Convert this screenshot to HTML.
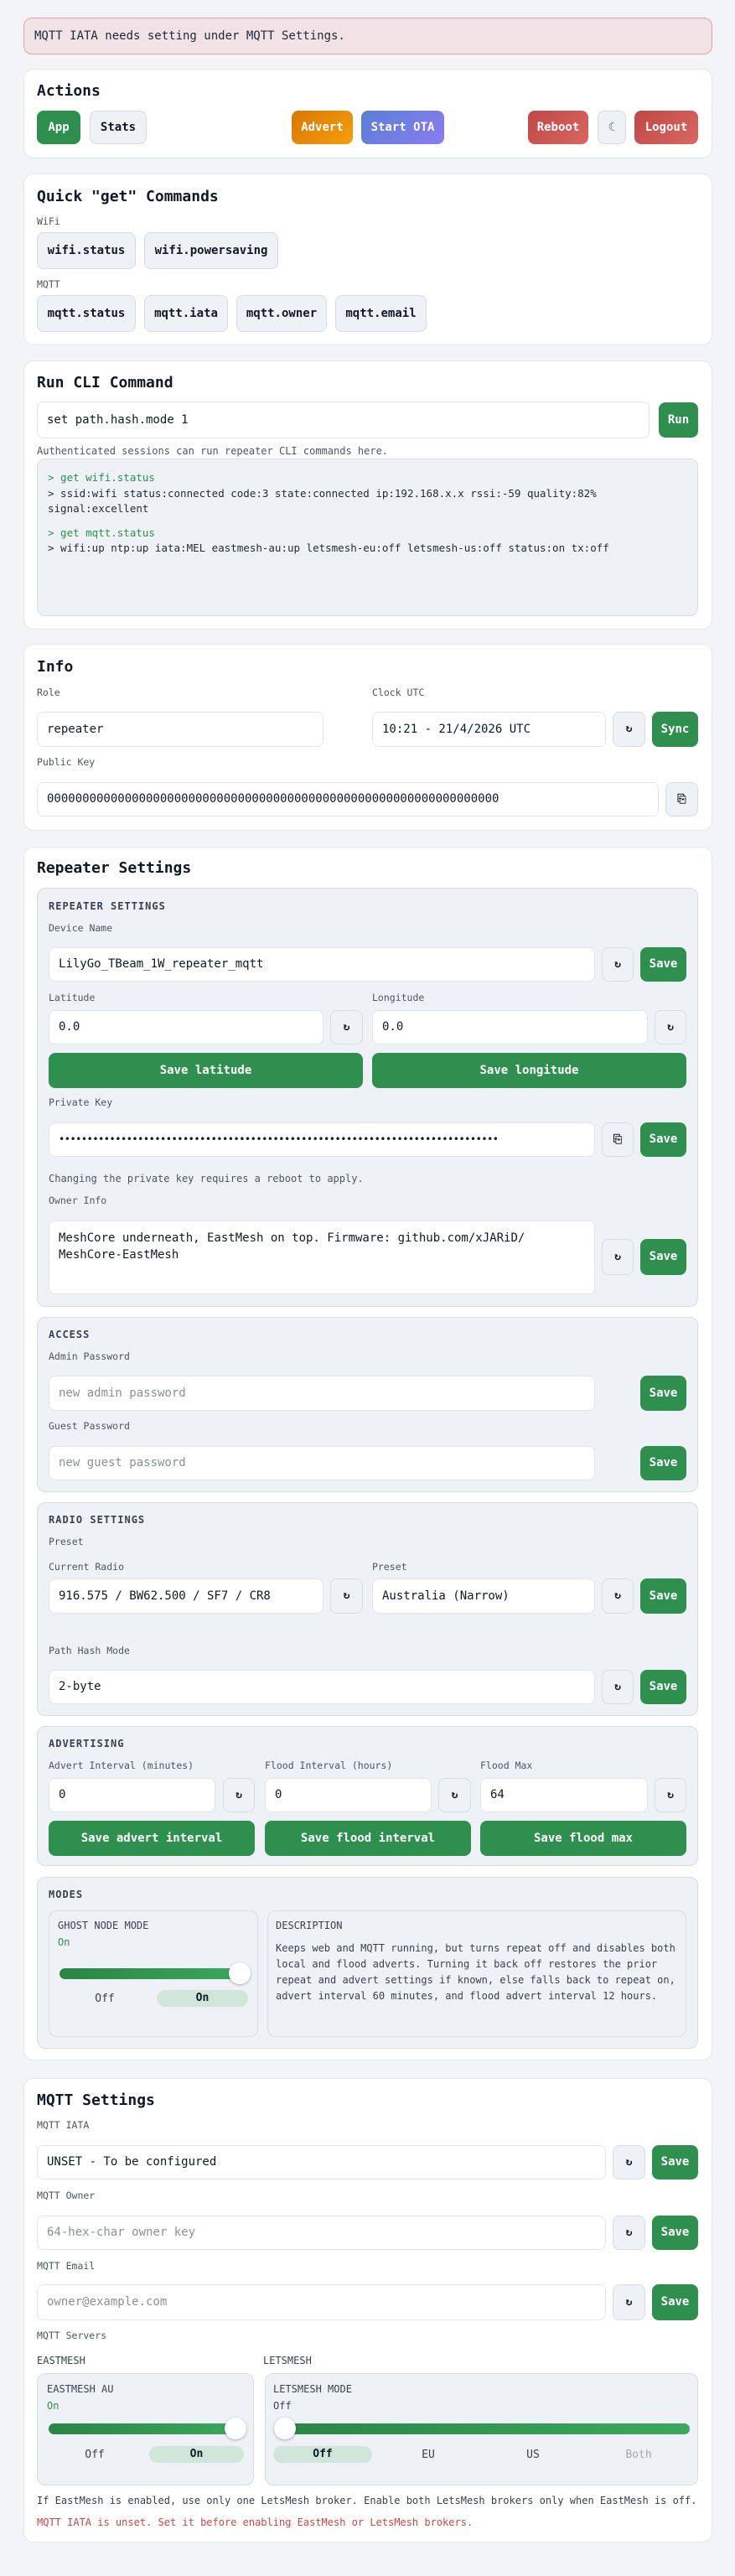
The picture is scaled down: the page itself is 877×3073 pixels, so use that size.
<!DOCTYPE html>
<html><head><meta charset="utf-8"><style>
*{box-sizing:border-box;margin:0;padding:0}
body{width:877px;height:3073px;background:#f2f4f8;font-family:"DejaVu Sans Mono","Liberation Mono",monospace;color:#1f2937;position:relative;overflow:hidden}
.a{position:absolute}
.card{position:absolute;left:28px;width:822px;background:#fff;border:1px solid #e3e7ee;border-radius:12px}
.sub{position:absolute;left:44px;width:789px;background:#eef2f7;border:1px solid #d6dce5;border-radius:10px}
.t{position:absolute;font-weight:bold;font-size:18px;color:#111827;line-height:22px}
.l{position:absolute;font-size:11.5px;color:#4b5563;line-height:14px}
.h{position:absolute;font-size:12px;font-weight:bold;letter-spacing:1px;color:#374151;line-height:14px}
.in{position:absolute;background:#fff;border:1px solid #e1e5eb;border-radius:8px;font-size:14px;padding-left:11px;color:#111827;white-space:nowrap;overflow:hidden}
.ph{color:#8a9099}
.b{position:absolute;border-radius:8px;font-weight:bold;font-size:14px;color:#fff;text-align:center;white-space:nowrap}
.g{background:#2f8f4e}
.ib{position:absolute;background:#eef2f7;border:1px solid #d6dce5;border-radius:8px;text-align:center;font-size:13px;font-weight:bold;color:#111827}
.gb{position:absolute;background:#eef2f7;border:1px solid #d6dce5;border-radius:8px;text-align:center;font-size:14px;font-weight:bold;color:#111827}
.trk{position:absolute;height:13px;border-radius:7px;background:linear-gradient(90deg,#2a8546,#3aa95d)}
.knob{position:absolute;width:26px;height:26px;border-radius:50%;background:#fff;box-shadow:0 1px 3px rgba(0,0,0,.3)}
.pill{position:absolute;background:#cfe6d8;border-radius:10px;text-align:center;font-weight:bold;font-size:13px;color:#111827}
.opt{position:absolute;font-size:13px;color:#374151;text-align:center}
</style></head><body>

<!-- alert -->
<div class="a" style="left:28px;top:21px;width:822px;height:44px;background:#f0e2e5;border:1px solid #e3a3a8;border-radius:10px;font-size:14px;line-height:42px;padding-left:12px;color:#1f2937">MQTT IATA needs setting under MQTT Settings.</div>

<!-- Actions -->
<div class="card" style="top:82px;height:107px"></div>
<div class="t" style="left:44px;top:98px">Actions</div>
<div class="b g" style="left:44px;top:132px;width:52px;height:40px;line-height:40px">App</div>
<div class="gb" style="left:107px;top:132px;width:68px;height:40px;line-height:38px">Stats</div>
<div class="b" style="left:348px;top:132px;width:73px;height:40px;line-height:40px;background:linear-gradient(135deg,#d97706,#f59e0b)">Advert</div>
<div class="b" style="left:431px;top:132px;width:99px;height:40px;line-height:40px;background:linear-gradient(135deg,#5a7fd4,#8a7cf0)">Start OTA</div>
<div class="b" style="left:630px;top:132px;width:72px;height:40px;line-height:40px;background:linear-gradient(135deg,#bf4748,#d9675f)">Reboot</div>
<div class="gb" style="left:713px;top:132px;width:34px;height:40px;line-height:38px;font-weight:normal;color:#555">☾</div>
<div class="b" style="left:757px;top:132px;width:76px;height:40px;line-height:40px;background:linear-gradient(135deg,#bf4748,#d9675f)">Logout</div>

<!-- Quick get -->
<div class="card" style="top:207px;height:205px"></div>
<div class="t" style="left:44px;top:224px">Quick "get" Commands</div>
<div class="l" style="left:44px;top:257px">WiFi</div>
<div class="gb" style="left:44px;top:277px;width:118px;height:44px;line-height:42px">wifi.status</div>
<div class="gb" style="left:172px;top:277px;width:160px;height:44px;line-height:42px">wifi.powersaving</div>
<div class="l" style="left:44px;top:332px">MQTT</div>
<div class="gb" style="left:44px;top:352px;width:118px;height:44px;line-height:42px">mqtt.status</div>
<div class="gb" style="left:172px;top:352px;width:100px;height:44px;line-height:42px">mqtt.iata</div>
<div class="gb" style="left:282px;top:352px;width:108px;height:44px;line-height:42px">mqtt.owner</div>
<div class="gb" style="left:400px;top:352px;width:109px;height:44px;line-height:42px">mqtt.email</div>

<!-- CLI -->
<div class="card" style="top:430px;height:321px"></div>
<div class="t" style="left:44px;top:446px">Run CLI Command</div>
<div class="in" style="left:44px;top:479px;width:731px;height:44px;line-height:42px">set path.hash.mode 1</div>
<div class="b g" style="left:786px;top:480px;width:47px;height:42px;line-height:42px">Run</div>
<div class="l" style="left:44px;top:531px;font-size:12px">Authenticated sessions can run repeater CLI commands here.</div>
<div class="a" style="left:44px;top:547px;width:789px;height:188px;background:#eef2f7;border:1px solid #d6dce5;border-radius:10px;font-size:12.5px;line-height:18.5px;padding:13px 12px;color:#1f2937">
<div style="color:#2f8f4e">&gt; get wifi.status</div>
<div>&gt; ssid:wifi status:connected code:3 state:connected ip:192.168.x.x rssi:-59 quality:82% signal:excellent</div>
<div style="color:#2f8f4e;margin-top:10px">&gt; get mqtt.status</div>
<div>&gt; wifi:up ntp:up iata:MEL eastmesh-au:up letsmesh-eu:off letsmesh-us:off status:on tx:off</div>
</div>

<!-- Info -->
<div class="card" style="top:768px;height:223px"></div>
<div class="t" style="left:44px;top:785px">Info</div>
<div class="l" style="left:44px;top:819px">Role</div>
<div class="l" style="left:444px;top:819px">Clock UTC</div>
<div class="in" style="left:44px;top:849px;width:342px;height:42px;line-height:40px">repeater</div>
<div class="in" style="left:444px;top:849px;width:279px;height:42px;line-height:40px">10:21 - 21/4/2026 UTC</div>
<div class="ib" style="left:731px;top:849px;width:39px;height:42px;line-height:40px">↻</div>
<div class="b g" style="left:778px;top:849px;width:55px;height:42px;line-height:42px">Sync</div>
<div class="l" style="left:44px;top:902px">Public Key</div>
<div class="in" style="left:44px;top:933px;width:742px;height:41px;line-height:39px">0000000000000000000000000000000000000000000000000000000000000000</div>
<div class="ib" style="left:794px;top:933px;width:39px;height:41px;line-height:39px">⎘</div>

<!-- Repeater Settings -->
<div class="card" style="top:1010px;height:1448px"></div>
<div class="t" style="left:44px;top:1025px">Repeater Settings</div>

<div class="sub" style="top:1059px;height:500px"></div>
<div class="h" style="left:58px;top:1074px">REPEATER SETTINGS</div>
<div class="l" style="left:58px;top:1100px">Device Name</div>
<div class="in" style="left:58px;top:1130px;width:652px;height:41px;line-height:39px">LilyGo_TBeam_1W_repeater_mqtt</div>
<div class="ib" style="left:718px;top:1130px;width:38px;height:41px;line-height:39px">↻</div>
<div class="b g" style="left:764px;top:1130px;width:55px;height:41px;line-height:41px">Save</div>
<div class="l" style="left:58px;top:1183px">Latitude</div>
<div class="l" style="left:444px;top:1183px">Longitude</div>
<div class="in" style="left:58px;top:1205px;width:328px;height:41px;line-height:39px">0.0</div>
<div class="ib" style="left:394px;top:1205px;width:39px;height:41px;line-height:39px">↻</div>
<div class="in" style="left:444px;top:1205px;width:329px;height:41px;line-height:39px">0.0</div>
<div class="ib" style="left:781px;top:1205px;width:38px;height:41px;line-height:39px">↻</div>
<div class="b g" style="left:58px;top:1256px;width:375px;height:42px;line-height:42px">Save latitude</div>
<div class="b g" style="left:444px;top:1256px;width:375px;height:42px;line-height:42px">Save longitude</div>
<div class="l" style="left:58px;top:1308px">Private Key</div>
<div class="in" style="left:58px;top:1339px;width:652px;height:41px;line-height:39px;font-size:12px;letter-spacing:-0.5px">••••••••••••••••••••••••••••••••••••••••••••••••••••••••••••••••••••••••••••••</div>
<div class="ib" style="left:718px;top:1339px;width:38px;height:41px;line-height:39px">⎘</div>
<div class="b g" style="left:764px;top:1339px;width:55px;height:41px;line-height:41px">Save</div>
<div class="l" style="left:58px;top:1399px;font-size:12px">Changing the private key requires a reboot to apply.</div>
<div class="l" style="left:58px;top:1425px">Owner Info</div>
<div class="in" style="left:58px;top:1456px;width:652px;height:88px;line-height:20px;padding-top:10px;white-space:normal">MeshCore underneath, EastMesh on top. Firmware: github.com/xJARiD/<br>MeshCore-EastMesh</div>
<div class="ib" style="left:718px;top:1478px;width:38px;height:43px;line-height:41px">↻</div>
<div class="b g" style="left:764px;top:1478px;width:55px;height:43px;line-height:43px">Save</div>

<div class="sub" style="top:1571px;height:209px"></div>
<div class="h" style="left:58px;top:1585px">ACCESS</div>
<div class="l" style="left:58px;top:1611px">Admin Password</div>
<div class="in ph" style="left:58px;top:1641px;width:652px;height:42px;line-height:40px;color:#8a9099">new admin password</div>
<div class="b g" style="left:764px;top:1641px;width:55px;height:42px;line-height:42px">Save</div>
<div class="l" style="left:58px;top:1694px">Guest Password</div>
<div class="in" style="left:58px;top:1725px;width:652px;height:41px;line-height:39px;color:#8a9099">new guest password</div>
<div class="b g" style="left:764px;top:1725px;width:55px;height:41px;line-height:41px">Save</div>

<div class="sub" style="top:1792px;height:255px"></div>
<div class="h" style="left:58px;top:1806px">RADIO SETTINGS</div>
<div class="l" style="left:58px;top:1832px">Preset</div>
<div class="l" style="left:58px;top:1862px">Current Radio</div>
<div class="l" style="left:444px;top:1862px">Preset</div>
<div class="in" style="left:58px;top:1883px;width:328px;height:42px;line-height:40px">916.575 / BW62.500 / SF7 / CR8</div>
<div class="ib" style="left:394px;top:1883px;width:39px;height:42px;line-height:40px">↻</div>
<div class="in" style="left:444px;top:1883px;width:266px;height:42px;line-height:40px">Australia (Narrow)</div>
<div class="ib" style="left:718px;top:1883px;width:38px;height:42px;line-height:40px">↻</div>
<div class="b g" style="left:764px;top:1883px;width:55px;height:42px;line-height:42px">Save</div>
<div class="l" style="left:58px;top:1962px">Path Hash Mode</div>
<div class="in" style="left:58px;top:1992px;width:652px;height:41px;line-height:39px">2-byte</div>
<div class="ib" style="left:718px;top:1992px;width:38px;height:41px;line-height:39px">↻</div>
<div class="b g" style="left:764px;top:1992px;width:55px;height:41px;line-height:41px">Save</div>

<div class="sub" style="top:2059px;height:167px"></div>
<div class="h" style="left:58px;top:2073px">ADVERTISING</div>
<div class="l" style="left:58px;top:2099px">Advert Interval (minutes)</div>
<div class="l" style="left:316px;top:2099px">Flood Interval (hours)</div>
<div class="l" style="left:573px;top:2099px">Flood Max</div>
<div class="in" style="left:58px;top:2121px;width:199px;height:41px;line-height:39px">0</div>
<div class="ib" style="left:266px;top:2121px;width:38px;height:41px;line-height:39px">↻</div>
<div class="in" style="left:316px;top:2121px;width:199px;height:41px;line-height:39px">0</div>
<div class="ib" style="left:523px;top:2121px;width:39px;height:41px;line-height:39px">↻</div>
<div class="in" style="left:573px;top:2121px;width:200px;height:41px;line-height:39px">64</div>
<div class="ib" style="left:781px;top:2121px;width:38px;height:41px;line-height:39px">↻</div>
<div class="b g" style="left:58px;top:2172px;width:246px;height:42px;line-height:42px">Save advert interval</div>
<div class="b g" style="left:316px;top:2172px;width:246px;height:42px;line-height:42px">Save flood interval</div>
<div class="b g" style="left:573px;top:2172px;width:246px;height:42px;line-height:42px">Save flood max</div>

<div class="sub" style="top:2239px;height:205px"></div>
<div class="h" style="left:58px;top:2253px">MODES</div>
<div class="a" style="left:58px;top:2279px;width:250px;height:151px;border:1px solid #d6dce5;border-radius:10px"></div>
<div class="a" style="left:319px;top:2279px;width:500px;height:151px;border:1px solid #d6dce5;border-radius:10px"></div>
<div class="l" style="left:69px;top:2290px;font-size:12px;color:#374151">GHOST NODE MODE</div>
<div class="l" style="left:69px;top:2310px;font-size:12px;color:#2f8f4e">On</div>
<div class="trk" style="left:71px;top:2348px;width:225px"></div>
<div class="knob" style="left:273px;top:2341px"></div>
<div class="opt" style="left:80px;top:2377px;width:90px">Off</div>
<div class="pill" style="left:187px;top:2374px;width:109px;height:20px;line-height:20px">On</div>
<div class="l" style="left:329px;top:2290px;font-size:12px;color:#374151">DESCRIPTION</div>
<div class="a" style="left:329px;top:2315px;width:480px;font-size:12px;line-height:19px;color:#374151">Keeps web and MQTT running, but turns repeat off and disables both local and flood adverts. Turning it back off restores the prior repeat and advert settings if known, else falls back to repeat on, advert interval 60 minutes, and flood advert interval 12 hours.</div>

<!-- MQTT -->
<div class="card" style="top:2479px;height:554px"></div>
<div class="t" style="left:44px;top:2495px">MQTT Settings</div>
<div class="l" style="left:44px;top:2528px">MQTT IATA</div>
<div class="in" style="left:44px;top:2559px;width:679px;height:41px;line-height:39px">UNSET - To be configured</div>
<div class="ib" style="left:731px;top:2559px;width:39px;height:41px;line-height:39px">↻</div>
<div class="b g" style="left:778px;top:2559px;width:55px;height:41px;line-height:41px">Save</div>
<div class="l" style="left:44px;top:2612px">MQTT Owner</div>
<div class="in" style="left:44px;top:2643px;width:679px;height:41px;line-height:39px;color:#8a9099">64-hex-char owner key</div>
<div class="ib" style="left:731px;top:2643px;width:39px;height:41px;line-height:39px">↻</div>
<div class="b g" style="left:778px;top:2643px;width:55px;height:41px;line-height:41px">Save</div>
<div class="l" style="left:44px;top:2696px">MQTT Email</div>
<div class="in" style="left:44px;top:2725px;width:679px;height:43px;line-height:41px;color:#8a9099">owner@example.com</div>
<div class="ib" style="left:731px;top:2725px;width:39px;height:43px;line-height:41px">↻</div>
<div class="b g" style="left:778px;top:2725px;width:55px;height:43px;line-height:43px">Save</div>
<div class="l" style="left:44px;top:2779px">MQTT Servers</div>
<div class="l" style="left:44px;top:2809px;font-size:12px;color:#374151">EASTMESH</div>
<div class="l" style="left:314px;top:2809px;font-size:12px;color:#374151">LETSMESH</div>
<div class="a" style="left:44px;top:2831px;width:259px;height:134px;background:#eef2f7;border:1px solid #d6dce5;border-radius:10px"></div>
<div class="a" style="left:316px;top:2831px;width:517px;height:134px;background:#eef2f7;border:1px solid #d6dce5;border-radius:10px"></div>
<div class="l" style="left:56px;top:2843px;font-size:12px;color:#374151">EASTMESH AU</div>
<div class="l" style="left:56px;top:2863px;font-size:12px;color:#2f8f4e">On</div>
<div class="trk" style="left:58px;top:2891px;width:235px"></div>
<div class="knob" style="left:268px;top:2884px"></div>
<div class="opt" style="left:68px;top:2921px;width:90px">Off</div>
<div class="pill" style="left:178px;top:2918px;width:113px;height:20px;line-height:20px">On</div>
<div class="l" style="left:326px;top:2843px;font-size:12px;color:#374151">LETSMESH MODE</div>
<div class="l" style="left:326px;top:2863px;font-size:12px;color:#374151">Off</div>
<div class="trk" style="left:328px;top:2891px;width:495px"></div>
<div class="knob" style="left:327px;top:2884px"></div>
<div class="pill" style="left:326px;top:2918px;width:118px;height:20px;line-height:20px">Off</div>
<div class="opt" style="left:481px;top:2921px;width:60px">EU</div>
<div class="opt" style="left:606px;top:2921px;width:60px">US</div>
<div class="opt" style="left:732px;top:2921px;width:60px;color:#a0a7b1">Both</div>
<div class="l" style="left:44px;top:2976px;font-size:12px;color:#374151">If EastMesh is enabled, use only one LetsMesh broker. Enable both LetsMesh brokers only when EastMesh is off.</div>
<div class="l" style="left:44px;top:3002px;font-size:12px;color:#d14343">MQTT IATA is unset. Set it before enabling EastMesh or LetsMesh brokers.</div>
</body></html>
